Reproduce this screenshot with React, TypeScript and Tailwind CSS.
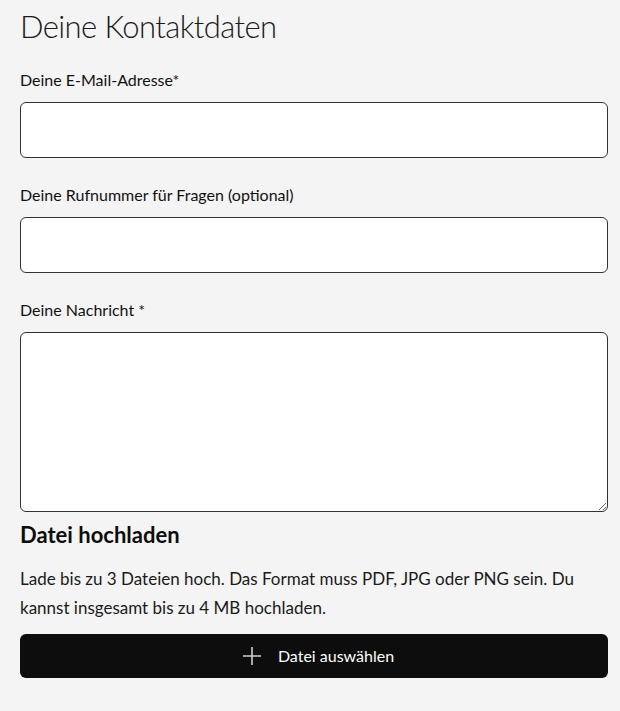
import React from 'react'

const font = { fontFamily: 'Lato, "Open Sans", sans-serif' }

const Field = ({ label, tall }: { label: string; tall?: boolean }) => (
  <div className="flex flex-col">
    <label className="mb-[10px] text-[16px] leading-6 text-[#111]">{label}</label>
    {tall ? (
      <textarea className="h-[180px] w-full resize-y rounded-[6px] border border-[#333] bg-white" />
    ) : (
      <input className="h-14 w-full rounded-[6px] border border-[#333] bg-white" />
    )}
  </div>
)

const App = () => {
  return (
    <div className="min-h-[711px] bg-[#f4f4f4] pr-3 pl-5 pt-[6px]" style={font}>
      <div className="flex w-[588px] flex-col">
        <h1 className="mb-[22px] text-[31px] leading-10 font-light tracking-[-0.6px] text-[#1a1a1a]">
          Deine Kontaktdaten
        </h1>
        <div className="flex flex-col gap-[25px]">
          <Field label="Deine E-Mail-Adresse*" />
          <Field label="Deine Rufnummer für Fragen (optional)" />
          <Field label="Deine Nachricht *" tall />
        </div>
        <h2 className="mt-[9px] text-[22px] leading-7 font-bold text-[#0d0d0d]">Datei hochladen</h2>
        <p className="mt-[15px] text-[17px] leading-[29px] text-[#1a1a1a]">
          Lade bis zu 3 Dateien hoch. Das Format muss PDF, JPG oder PNG sein. Du kannst insgesamt bis zu 4 MB
          hochladen.
        </p>
        <button className="mt-[12px] flex h-11 w-full items-center justify-center gap-[16px] rounded-[6px] bg-[#0d0d0d] pl-[8px] text-[16px] text-white">
          <svg width="20" height="20" viewBox="0 0 20 20" fill="none" stroke="#cfcfcf" strokeWidth="1.6">
            <path d="M10 1v18M1 10h18" />
          </svg>
          <span>Datei auswählen</span>
        </button>
      </div>
    </div>
  )
}

export default App
